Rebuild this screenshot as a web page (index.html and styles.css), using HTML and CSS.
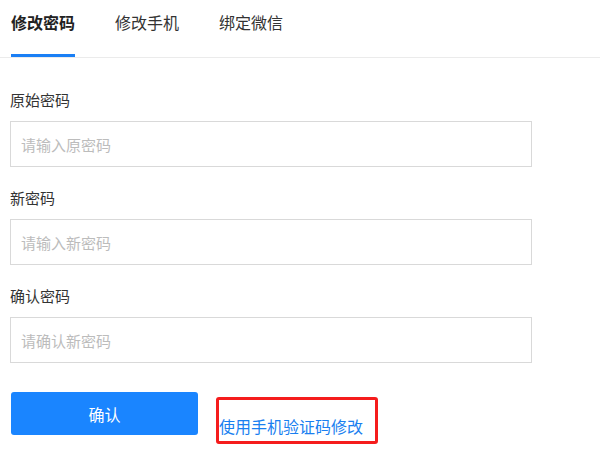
FILE: index.html
```html
<!DOCTYPE html>
<html lang="zh-CN">
<head>
<meta charset="utf-8">
<link rel="stylesheet" href="styles.css">
</head>
<body>
<div class="tabs">
  <div class="tab active">修改密码</div>
  <div class="tab">修改手机</div>
  <div class="tab">绑定微信</div>
</div>
<form class="form">
  <div class="group">
    <label class="label">原始密码</label>
    <input class="input" type="password" placeholder="请输入原密码">
  </div>
  <div class="group">
    <label class="label">新密码</label>
    <input class="input" type="password" placeholder="请输入新密码">
  </div>
  <div class="group">
    <label class="label">确认密码</label>
    <input class="input" type="password" placeholder="请确认新密码">
  </div>
  <div class="actions">
    <button class="btn" type="button">确认</button>
    <div class="mark"><a class="link" href="#">使用手机验证码修改</a></div>
  </div>
</form>
</body>
</html>
```

FILE: styles.css
```css
* { box-sizing: border-box; }
body {
  margin: 0;
  background: #fff;
  font-family: "Noto Sans CJK SC", "Noto Sans", sans-serif;
  color: #333;
}
.tabs {
  display: flex;
  gap: 40px;
  padding-left: 11px;
  border-bottom: 1px solid #ebebeb;
  height: 58px;
}
.tab {
  height: 57px;
  padding-top: 10px;
  font-size: 16px;
  line-height: 24px;
  color: #333;
  border-bottom: 3px solid transparent;
}
.tab.active {
  font-weight: bold;
  color: #222;
  border-bottom-color: #1a7ff5;
}
.form {
  padding: 31px 0 0 10px;
}
.group {
  display: flex;
  flex-direction: column;
  gap: 10px;
  margin-bottom: 20px;
}
.label {
  font-size: 15px;
  line-height: 22px;
  color: #333;
}
.input {
  width: 522px;
  height: 46px;
  border: 1px solid #d9d9d9;
  padding: 0 10px;
  font-family: inherit;
  font-size: 15px;
  color: #333;
  outline: none;
}
.input::placeholder { color: #bcbcbc; }
.actions {
  display: flex;
  align-items: flex-start;
  gap: 18px;
  padding-top: 9px;
  padding-left: 1px;
}
.btn {
  width: 187px;
  height: 43px;
  border: none;
  border-radius: 3px;
  background: #1a85ff;
  color: #fff;
  font-family: inherit;
  font-size: 16px;
}
.mark {
  margin-top: 5px;
  width: 162px;
  height: 47px;
  border: 3px solid #f51c1c;
  border-radius: 3px;
  display: flex;
  align-items: flex-end;
  padding-bottom: 4px;
}
.link {
  font-size: 16px;
  line-height: 22px;
  color: #1a7ff0;
  text-decoration: none;
  white-space: nowrap;
}
```
